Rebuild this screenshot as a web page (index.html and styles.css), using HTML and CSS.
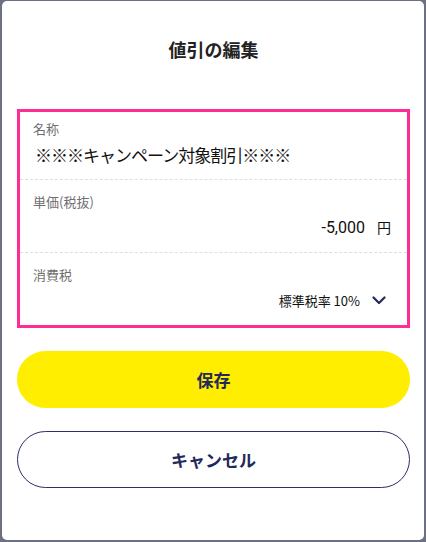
FILE: index.html
```html
<!DOCTYPE html>
<html lang="ja">
<head>
<meta charset="utf-8">
<title>値引の編集</title>
<link rel="stylesheet" href="styles.css">
</head>
<body>
	<div class="modal">
		<h1 class="modal-title">値引の編集</h1>

		<div class="form-box">
			<div class="field first">
				<div class="field-label">名称</div>
				<div class="field-value name">※※※キャンペーン対象割引※※※</div>
			</div>
			<div class="field">
				<div class="field-label">単価(税抜)</div>
				<div class="field-value right">
					<span class="amount">-5,000</span><span class="unit">円</span>
				</div>
			</div>
			<div class="field">
				<div class="field-label">消費税</div>
				<div class="field-value right">
					<span class="select-text">標準税率 10%</span>
					<svg class="chevron" width="14" height="9" viewBox="0 0 14 9"><path d="M1.5 1.5 L7 7 L12.5 1.5" fill="none" stroke="#23295a" stroke-width="2.2" stroke-linecap="round" stroke-linejoin="round"/></svg>
				</div>
			</div>
		</div>

		<button class="btn btn-save">保存</button>
		<button class="btn btn-cancel">キャンセル</button>
	</div>
</body>
</html>
```

FILE: styles.css
```css
*
{
	box-sizing: border-box;
}
body
{
	margin: 0;
	padding: 1px 2px 2px 2px;
	background: #6d7080;
	font-family: "Noto Sans CJK JP", "Noto Sans", sans-serif;
	color: #222;
}
.modal{
	height: 539px;
	background: #fff;
	border-radius: 5px;
	padding: 0 14px 0 15px;
	display: flex;
	flex-direction: column;
}
.modal-title{
	margin: 34px 0 0 0;
	height: 28px;
	line-height: 28px;
	font-size: 18px;
	font-weight: bold;
	text-align: center;
	color: #222;
}
.form-box{
	margin-top: 46px;
	border: 3px solid #ff2c95;
	display: flex;
	flex-direction: column;
}
.field{
	padding: 12px 16px 10px 13px;
	border-top: 1px dashed #dedede;
}
.field.first{
	padding-top: 7px;
	border-top: none;
}
.field-label{
	font-size: 13px;
	line-height: 20px;
	color: #6f6f6f;
}
.field-value{
	height: 30px;
	display: flex;
	align-items: center;
	color: #111;
}
.field-value.name{
	font-size: 17px;
	letter-spacing: -1px;
	padding-left: 2px;
}
.field-value.right{
	justify-content: flex-end;
}
.amount{
	font-family: Roboto, "Noto Sans", sans-serif;
	font-size: 16px;
}
.unit{
	font-size: 14px;
	margin-left: 12px;
}
.select-text{
	font-size: 13px;
}
.chevron{
	margin-left: 12px;
	margin-right: 5px;
}
.btn{
	width: 393px;
	height: 57px;
	border-radius: 29px;
	font-family: "Noto Sans CJK JP", sans-serif;
	font-size: 17px;
	font-weight: bold;
	color: #23295a;
	cursor: pointer;
}
.btn-save{
	margin-top: 23px;
	background: #ffee00;
	border: none;
}
.btn-cancel{
	margin-top: 23px;
	background: #fff;
	border: 1px solid #2a2f66;
}
```
